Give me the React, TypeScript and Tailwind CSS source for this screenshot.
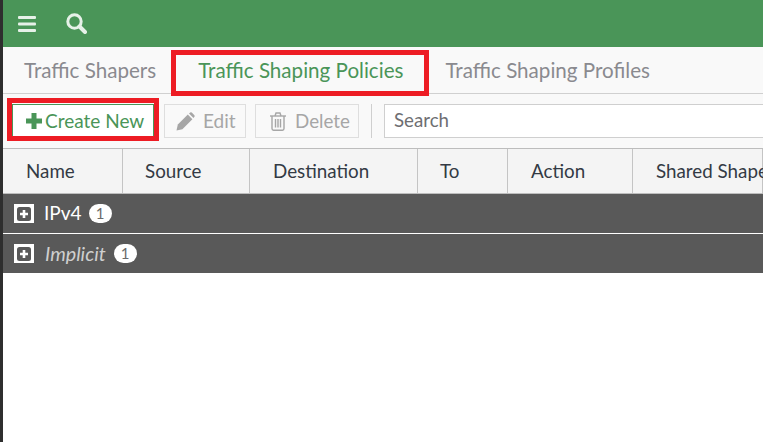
const columns = [
  { name: "Name", width: "w-[120px]", pad: "pl-[23px]" },
  { name: "Source", width: "w-[127px]", pad: "pl-[22px]" },
  { name: "Destination", width: "w-[168px]", pad: "pl-[23px]" },
  { name: "To", width: "w-[90px]", pad: "pl-[22px]" },
  { name: "Action", width: "w-[125px]", pad: "pl-[23px]" },
  { name: "Shared Shaper", width: "w-[130px]", pad: "pl-[23px]" },
];

function BarsIcon() {
  return (
    <svg width="18" height="16" viewBox="0 0 18 16" fill="#e6f1e8">
      <rect y="0" width="18" height="3" rx="1" />
      <rect y="6.5" width="18" height="3" rx="1" />
      <rect y="13" width="18" height="3" rx="1" />
    </svg>
  );
}

function SearchIcon() {
  return (
    <svg width="21" height="21" viewBox="0 0 21 21" fill="none" stroke="#e6f1e8">
      <circle cx="8.5" cy="8.5" r="6.7" strokeWidth="3" />
      <path d="M13.5 13.5 L19 19" strokeWidth="4" strokeLinecap="round" />
    </svg>
  );
}

function PencilIcon() {
  return (
    <svg width="19" height="19" viewBox="0 0 19 19" fill="#a6a6a6">
      <path d="M0.5 18.5 L1.8 12.6 L11.8 2.6 L16.4 7.2 L6.4 17.2 Z" />
      <path d="M13 1.4 L14.2 0.4 Q15 -0.1 15.8 0.6 L18.4 3.2 Q19 4 18.4 4.8 L17.5 6 Z" />
    </svg>
  );
}

function TrashIcon() {
  return (
    <svg width="16" height="19" viewBox="0 0 16 19" fill="none" stroke="#a6a6a6" strokeWidth="1.4">
      <path d="M0 4 H16" />
      <path d="M5 4 L6 1 H10 L11 4" />
      <path d="M2 4 V16.5 Q2 18.2 3.5 18.2 H12.5 Q14 18.2 14 16.5 V4" />
      <path d="M5.5 7 V15.5 M8 7 V15.5 M10.5 7 V15.5" />
    </svg>
  );
}

function ExpandIcon() {
  return (
    <span className="flex h-[19px] w-5 items-center justify-center bg-white">
      <svg width="14" height="14" viewBox="0 0 14 14">
        <rect width="14" height="14" rx="2.5" fill="#595959" />
        <path d="M7 3 V11 M3 7 H11" stroke="#ffffff" strokeWidth="2.6" />
      </svg>
    </span>
  );
}

function GroupRow({ label, italic }: { label: string; italic?: boolean }) {
  return (
    <div className="flex h-[39px] items-center bg-[#595959] pl-[11px] mb-px">
      <ExpandIcon />
      <span
        className={
          italic
            ? "ml-[11px] mr-[8px] text-[19.8px] italic text-[#cfcfcf]"
            : "ml-[10px] mr-[7px] text-[19px] text-white"
        }
      >
        {label}
      </span>
      <span className="flex h-[19px] w-[23px] items-center justify-center rounded-full bg-white text-[15px] text-[#6a6a6a]">
        1
      </span>
    </div>
  );
}

export default function App() {
  return (
    <div className="relative flex h-[442px] w-[763px] overflow-hidden bg-white font-['Lato',sans-serif]">
      <div className="w-[3px] shrink-0 bg-[#2e2e2e]" />
      <div className="w-[760px] shrink-0">
        <div className="flex h-[47px] items-center bg-[#4a9558] pl-[15px]">
          <BarsIcon />
          <span className="ml-[30px]">
            <SearchIcon />
          </span>
        </div>

        <div className="flex h-[47px] items-center border-b border-[#d0d0d0] bg-[#f9f9f9] text-[20.6px] text-[#8a8a8f]">
          <span className="ml-[21px]">Traffic Shapers</span>
          <span className="ml-[42px] text-[#4a9558]">Traffic Shaping Policies</span>
          <span className="ml-[42px]">Traffic Shaping Profiles</span>
        </div>

        <div className="flex h-[54px] items-center bg-[#f9f9f9] pl-[9px]">
          <button className="flex h-[34px] w-[142px] items-center border border-[#4a9558] bg-white pl-[13px] text-[19px] text-[#4a9558]">
            <svg width="16" height="16" viewBox="0 0 16 16" fill="#4a9558" className="mr-[3px]">
              <path d="M5.5 0 H10.5 V5.5 H16 V10.5 H10.5 V16 H5.5 V10.5 H0 V5.5 H5.5 Z" />
            </svg>
            Create New
          </button>
          <button className="ml-[10px] flex h-[34px] w-[82px] items-center border border-[#dedede] pl-[11px] text-[19px] text-[#a6a6a6]">
            <PencilIcon />
            <span className="ml-[8px]">Edit</span>
          </button>
          <button className="ml-[9px] flex h-[34px] w-[104px] items-center border border-[#dedede] pl-[14px] text-[18.8px] text-[#a6a6a6]">
            <TrashIcon />
            <span className="ml-[9px]">Delete</span>
          </button>
          <span className="ml-[12px] h-[34px] w-px bg-[#cfcfcf]" />
          <div className="ml-3 flex h-[34px] flex-1 items-center border border-r-0 border-[#cfcfcf] bg-white pb-[2px] pl-[9px] text-[18.7px] text-[#6e6e72]">
            Search
          </div>
        </div>

        <div className="flex h-[46px] border-y border-[#bdbdbd] bg-[#f4f4f4] text-[18.8px] text-[#333a44]">
          {columns.map((c) => (
            <div
              key={c.name}
              className={`flex shrink-0 items-center border-r border-[#c4c4c4] whitespace-nowrap ${c.width} ${c.pad}`}
            >
              {c.name}
            </div>
          ))}
        </div>

        <GroupRow label="IPv4" />
        <GroupRow label="Implicit" italic />
      </div>

      <div className="absolute left-[171px] top-[50px] h-[46px] w-[258px] border-[5px] border-[#ed1c24]" />
      <div className="absolute left-[7px] top-[98px] h-[43px] w-[152px] border-[5px] border-[#ed1c24]" />
    </div>
  );
}
